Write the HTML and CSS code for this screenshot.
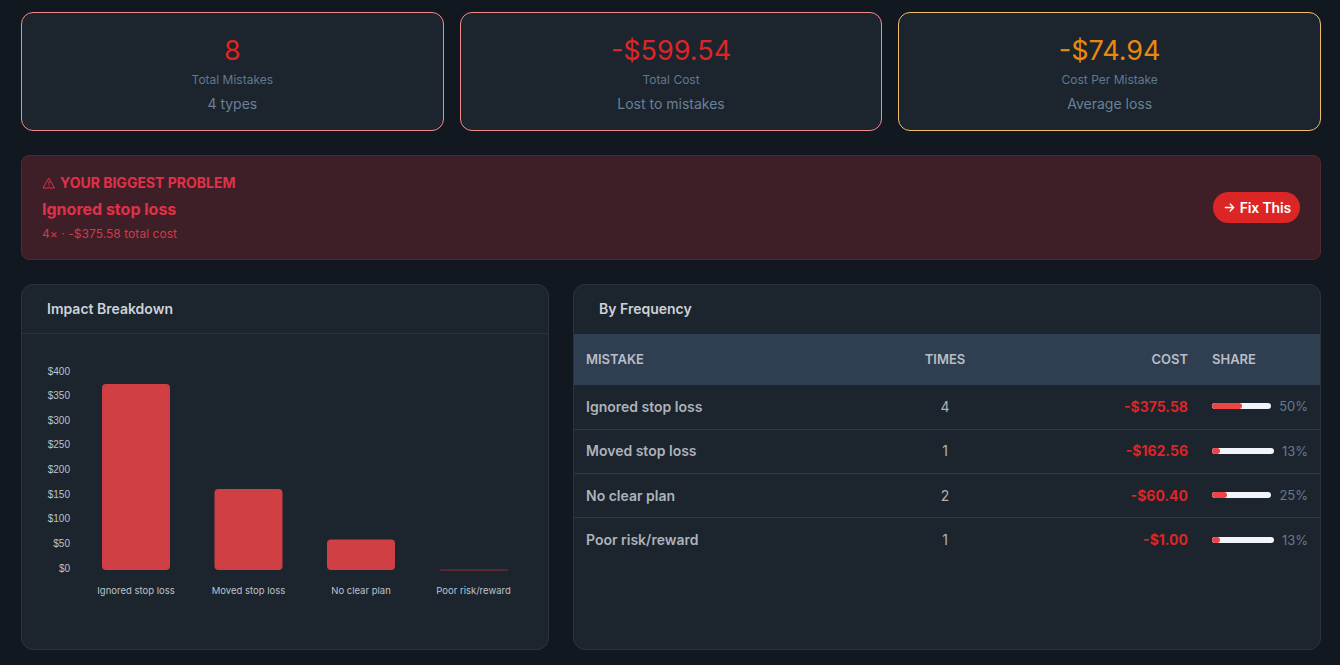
FILE: index.html
```html
<!DOCTYPE html>
<html>
<head>
  <title>Mistakes</title>
  <link rel="stylesheet" href="styles.css">
</head>
<body>
  <div class="stats">
    <div class="stat stat-red">
      <div class="stat-value">8</div>
      <div class="stat-label">Total Mistakes</div>
      <div class="stat-note">4 types</div>
    </div>
    <div class="stat stat-red">
      <div class="stat-value">-$599.54</div>
      <div class="stat-label">Total Cost</div>
      <div class="stat-note">Lost to mistakes</div>
    </div>
    <div class="stat stat-orange">
      <div class="stat-value">-$74.94</div>
      <div class="stat-label">Cost Per Mistake</div>
      <div class="stat-note">Average loss</div>
    </div>
  </div>

  <div class="problem">
    <div>
      <div class="problem-title">
        <svg class="problem-icon" viewBox="0 0 16 16" fill="none" stroke="currentColor" stroke-width="1.300" stroke-linejoin="round" stroke-linecap="round">
          <path d="M8 1.800 15.400 14.700H.6z"/>
          <path d="M8 6v4.200M8 12.300v.2"/>
        </svg>
        YOUR BIGGEST PROBLEM
      </div>
      <div class="problem-name">Ignored stop loss</div>
      <div class="problem-note">4× · -$375.58 total cost</div>
    </div>
    <button class="fix-button">
      <svg class="fix-icon" viewBox="0 0 16 16" fill="none" stroke="currentColor" stroke-width="2" stroke-linecap="round" stroke-linejoin="round">
        <path d="M2 8h12M9 3l5 5-5 5"/>
      </svg>
      Fix This
    </button>
  </div>

  <div class="panels">
    <div class="panel panel-chart">
      <div class="panel-header">Impact Breakdown</div>
      <svg class="chart" viewBox="22 334 526 315">
        <g class="y-labels">
          <text x="70" y="374.500">$400</text>
          <text x="70" y="399">$350</text>
          <text x="70" y="423.500">$300</text>
          <text x="70" y="448">$250</text>
          <text x="70" y="472.500">$200</text>
          <text x="70" y="497.500">$150</text>
          <text x="70" y="522">$100</text>
          <text x="70" y="546.500">$50</text>
          <text x="70" y="571.500">$0</text>
        </g>
        <rect class="bar" x="102" y="384" width="68" height="186" rx="4"/>
        <rect class="bar" x="214.500" y="489" width="68" height="81" rx="4"/>
        <rect class="bar" x="327" y="539.500" width="68" height="30.500" rx="4"/>
        <rect class="bar-small" x="440" y="569" width="68" height="2" rx="1"/>
        <g class="x-labels">
          <text x="136" y="594">Ignored stop loss</text>
          <text x="248.500" y="594">Moved stop loss</text>
          <text x="361" y="594">No clear plan</text>
          <text x="473.500" y="594">Poor risk/reward</text>
        </g>
      </svg>
    </div>

    <div class="panel panel-table">
      <div class="panel-header panel-header-flat">By Frequency</div>
      <table class="mistakes">
        <colgroup>
          <col class="col-name">
          <col class="col-times">
          <col class="col-cost">
          <col class="col-share">
        </colgroup>
        <thead>
          <tr>
            <th>MISTAKE</th>
            <th class="center">TIMES</th>
            <th class="right">COST</th>
            <th>SHARE</th>
          </tr>
        </thead>
        <tbody>
          <tr>
            <td class="name">Ignored stop loss</td>
            <td class="center">4</td>
            <td class="right cost">-$375.58</td>
            <td>
              <div class="share">
                <div class="share-track"><div class="share-fill" style="width: 50%"></div></div>
                <span>50%</span>
              </div>
            </td>
          </tr>
          <tr>
            <td class="name">Moved stop loss</td>
            <td class="center">1</td>
            <td class="right cost">-$162.56</td>
            <td>
              <div class="share">
                <div class="share-track"><div class="share-fill" style="width: 13%"></div></div>
                <span>13%</span>
              </div>
            </td>
          </tr>
          <tr>
            <td class="name">No clear plan</td>
            <td class="center">2</td>
            <td class="right cost">-$60.40</td>
            <td>
              <div class="share">
                <div class="share-track"><div class="share-fill" style="width: 25%"></div></div>
                <span>25%</span>
              </div>
            </td>
          </tr>
          <tr>
            <td class="name">Poor risk/reward</td>
            <td class="center">1</td>
            <td class="right cost">-$1.00</td>
            <td>
              <div class="share">
                <div class="share-track"><div class="share-fill" style="width: 13%"></div></div>
                <span>13%</span>
              </div>
            </td>
          </tr>
        </tbody>
      </table>
    </div>
  </div>
</body>
</html>
```

FILE: styles.css
```css
* {
  box-sizing: border-box;
}

body {
  margin: 0;
  padding: 12px 19px 15px 21px;
  background-color: #111820;
  font-family: "Inter", "Liberation Sans", sans-serif;
  color: #cbd5e0;
}

.stats {
  display: grid;
  grid-template-columns: repeat(3, 1fr);
  gap: 16px;
  margin-bottom: 24px;
}

.stat {
  height: 119px;
  padding-top: 21px;
  background-color: #1c242e;
  border: 1px solid #f08c8c;
  border-radius: 12px;
  text-align: center;
}

.stat-orange {
  border-color: #f3bc6c;
}

.stat-value {
  font-size: 27px;
  line-height: 33px;
  color: #dc2626;
}

.stat-orange .stat-value {
  color: #e8890c;
}

.stat-label {
  margin-top: 4px;
  font-size: 12px;
  line-height: 18px;
  color: #5f7a8e;
}

.stat-note {
  margin-top: 5px;
  font-size: 14px;
  line-height: 20px;
  color: #6b8094;
}

.problem {
  display: flex;
  align-items: center;
  justify-content: space-between;
  height: 105px;
  padding: 0 20px;
  margin-bottom: 24px;
  background-color: #3e1f28;
  border: 1px solid #552630;
  border-radius: 8px;
}

.problem-title {
  display: flex;
  align-items: center;
  gap: 5px;
  font-size: 14px;
  font-weight: 700;
  line-height: 20px;
  color: #e03146;
}

.problem-icon {
  width: 12px;
  height: 12px;
  margin-left: 1px;
}

.problem-name {
  margin-top: 6px;
  font-size: 16px;
  font-weight: 700;
  line-height: 20px;
  color: #e03146;
}

.problem-note {
  margin-top: 6px;
  font-size: 12px;
  letter-spacing: 0.050px;
  line-height: 18px;
  color: #d13a4a;
}

.fix-button {
  display: flex;
  align-items: center;
  gap: 5px;
  height: 31px;
  padding: 0 9px 0 11px;
  background-color: #dc2626;
  border: 0;
  border-radius: 16px;
  font-family: inherit;
  font-size: 14px;
  font-weight: 600;
  letter-spacing: -0.150px;
  color: #fff;
}

.fix-icon {
  width: 11px;
  height: 11px;
}

.panels {
  display: grid;
  grid-template-columns: 528px 748px;
  gap: 24px;
}

.panel {
  height: 366px;
  background-color: #1c242e;
  border: 1px solid #2a3441;
  border-radius: 12px;
  overflow: hidden;
}

.panel-header {
  height: 49px;
  padding-left: 25px;
  border-bottom: 1px solid #2a3441;
  font-size: 14px;
  font-weight: 600;
  line-height: 48px;
  color: #cdd2d8;
}

.panel-header-flat {
  border-bottom: 0;
}

.chart {
  display: block;
  width: 526px;
  height: 315px;
}

.y-labels text {
  font-family: "Liberation Sans", sans-serif;
  font-size: 10px;
  text-anchor: end;
  fill: #bcc3ca;
}

.x-labels text {
  font-family: "Inter", sans-serif;
  font-size: 9.500px;
  text-anchor: middle;
  fill: #bcc3ca;
}

.bar {
  fill: #cf3f44;
}

.bar-small {
  fill: #5c2630;
}

.mistakes {
  width: 746px;
  border-collapse: collapse;
  table-layout: fixed;
  font-size: 14px;
}

.col-name {
  width: 338px;
}

.col-times {
  width: 66px;
}

.col-cost {
  width: 222px;
}

.col-share {
  width: 120px;
}

.mistakes th {
  height: 51px;
  padding: 0 12px 2px;
  background-color: #2f3e50;
  font-size: 13px;
  font-weight: 600;
  text-align: left;
  color: #b8bec5;
}

.mistakes td {
  height: 44.300px;
  padding: 0 12px 1px;
  border-bottom: 1px solid #2f3a48;
  color: #adb3ba;
}

.mistakes tr:last-child td {
  border-bottom: 0;
}

.mistakes .center {
  text-align: center;
}

.mistakes .right {
  text-align: right;
}

.mistakes .name {
  font-weight: 600;
}

.mistakes .cost {
  font-weight: 700;
  color: #dc2626;
}

.share {
  display: flex;
  align-items: center;
  gap: 8px;
  font-size: 13px;
  color: #66798c;
}

.share-track {
  flex: 1;
  height: 6px;
  background-color: #f1f5f9;
  border-radius: 3px;
  overflow: hidden;
}

.share-fill {
  height: 100%;
  background-color: #ef4444;
  border-radius: 3px;
}
```
